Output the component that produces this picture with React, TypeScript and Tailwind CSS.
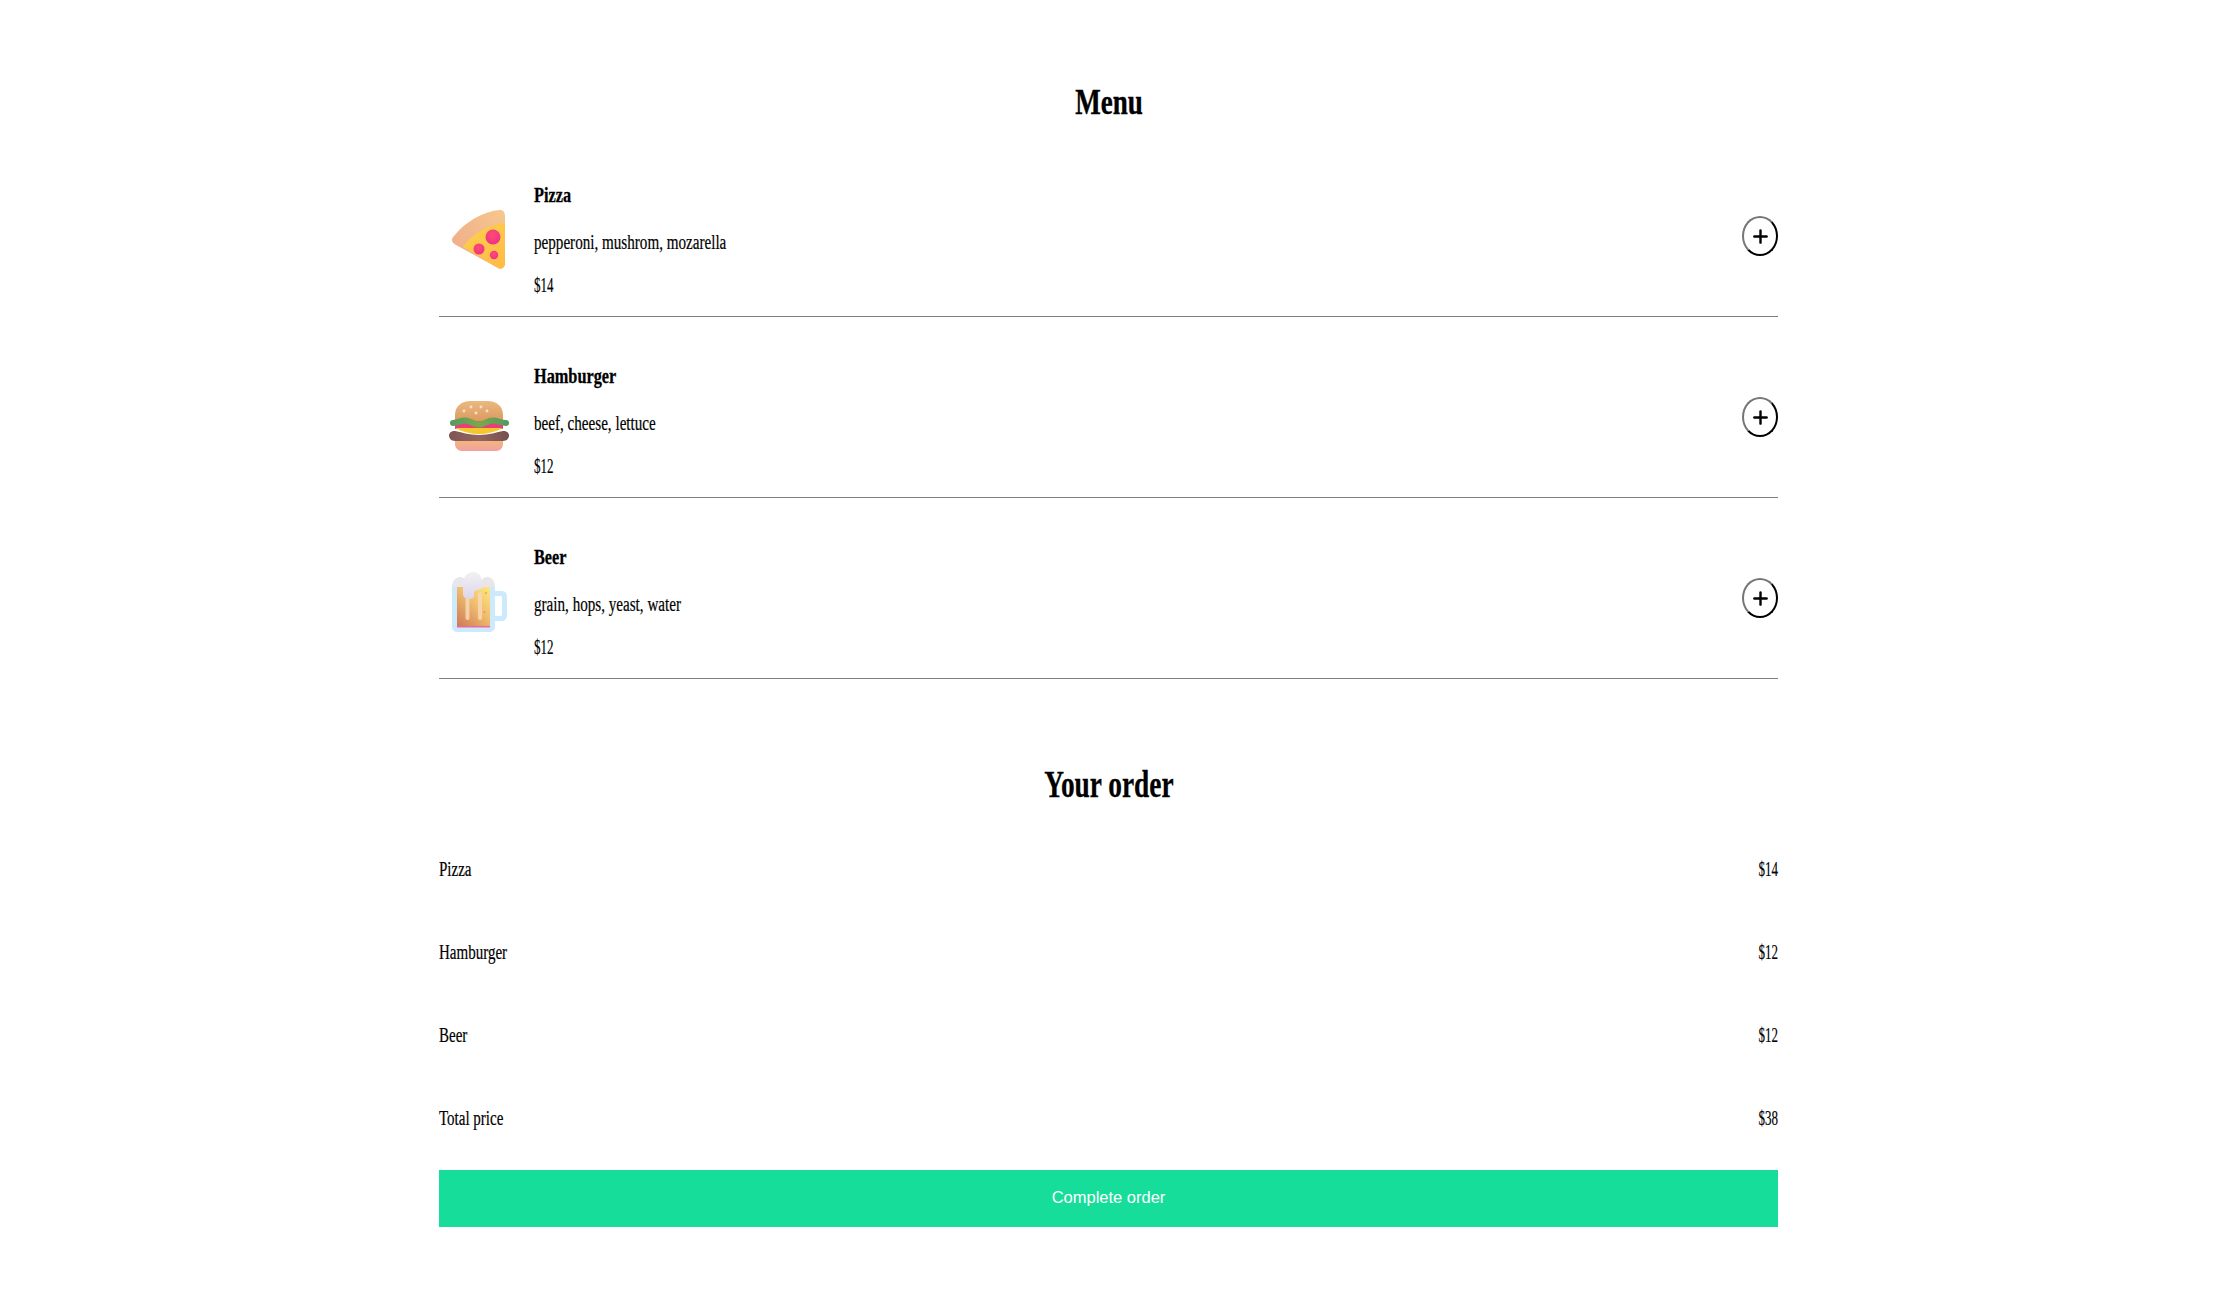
import { Plus } from "lucide-react";

const menuItems = [
  { name: "Pizza", ingredients: "pepperoni, mushrom, mozarella", price: "$14", icon: <PizzaIcon /> },
  { name: "Hamburger", ingredients: "beef, cheese, lettuce", price: "$12", icon: <BurgerIcon /> },
  { name: "Beer", ingredients: "grain, hops, yeast, water", price: "$12", icon: <BeerIcon /> },
];

const orderRows = [
  { label: "Pizza", price: "$14" },
  { label: "Hamburger", price: "$12" },
  { label: "Beer", price: "$12" },
  { label: "Total price", price: "$38" },
];

export default function App() {
  return (
    <div className="flex min-h-[1300px] justify-center bg-white pr-1.5 font-['Liberation_Serif',serif] text-black">
      <main className="w-[1339px]">
        <h1 className="h-[136px] pt-[80px] text-center text-[36px] leading-[44px] font-bold">
          <span className="inline-block scale-x-[0.75] [-webkit-text-stroke:0.4px_black]">Menu</span>
        </h1>

        {menuItems.map((item) => (
          <section key={item.name} className="flex h-[181px] items-start border-b border-[#808080]">
            <div className="mt-[74px] ml-[10px] h-[60px] w-[60px] shrink-0">{item.icon}</div>
            <div className="mt-[45px] ml-[25px] flex min-w-0 flex-1 flex-col">
              <h3 className="mb-[21px] h-[28px] text-[22px] leading-[28px] font-bold">
                <span className="inline-block origin-left scale-x-[0.74] whitespace-nowrap [-webkit-text-stroke:0.3px_black]">
                  {item.name}
                </span>
              </h3>
              <p className="mb-[19px] h-[24px] text-[20px] leading-[24px]">
                <span className="inline-block origin-left scale-x-[0.756] whitespace-nowrap [-webkit-text-stroke:0.2px_black]">
                  {item.ingredients}
                </span>
              </p>
              <p className="h-[24px] text-[20px] leading-[24px]">
                <span className="inline-block origin-left scale-x-[0.65] whitespace-nowrap [-webkit-text-stroke:0.2px_black]">
                  {item.price}
                </span>
              </p>
            </div>
            <button className="mt-[80px] flex h-[40px] w-[36px] shrink-0 items-center justify-center rounded-[50%] border-2 border-t-[#767676] border-r-black border-b-black border-l-[#767676] bg-white">
              <Plus size={21} strokeWidth={2.75} color="#000" />
            </button>
          </section>
        ))}

        <h2 className="mt-[80px] h-[50px] text-center text-[38px] leading-[50px] font-bold">
          <span className="inline-block scale-x-[0.72] [-webkit-text-stroke:0.3px_black]">Your order</span>
        </h2>

        <div className="mt-[48px]">
          {orderRows.map((row) => (
            <div key={row.label} className="flex h-[83px] justify-between text-[20px] leading-[24px]">
              <span className="inline-block origin-left scale-x-[0.75] whitespace-nowrap [-webkit-text-stroke:0.2px_black]">
                {row.label}
              </span>
              <span className="inline-block origin-right scale-x-[0.65] whitespace-nowrap [-webkit-text-stroke:0.2px_black]">
                {row.price}
              </span>
            </div>
          ))}
        </div>

        <button className="-mt-[19px] block h-[57px] w-full bg-[#17dd9a] pb-[2px] font-['Liberation_Sans',sans-serif] text-[16.5px] text-white">
          Complete order
        </button>
      </main>
    </div>
  );
}

function PizzaIcon() {
  return (
    <svg viewBox="0 0 60 60" className="h-full w-full">
      <defs>
        <linearGradient id="crust" x1="0" y1="1" x2="1" y2="0">
          <stop offset="0" stopColor="#eda98a" />
          <stop offset="1" stopColor="#f7c78d" />
        </linearGradient>
        <linearGradient id="cheese" x1="0" y1="0" x2="0.7" y2="1">
          <stop offset="0" stopColor="#fdd24c" />
          <stop offset="1" stopColor="#ffbc47" />
        </linearGradient>
        <radialGradient id="pepperoni" cx="0.45" cy="0.35" r="0.7">
          <stop offset="0" stopColor="#ff4d70" />
          <stop offset="1" stopColor="#ec2f8a" />
        </radialGradient>
      </defs>
      <path
        d="M5 26C16 12 33 2 50 0C54 -.4 56 2 56 6V53C56 57 53 60 49 58L7 35C2 32 2 29 5 26Z"
        fill="url(#crust)"
      />
      <path d="M14 37C22 25 38 15 56 13V53C56 57 53 60 49 58Z" fill="url(#cheese)" />
      <circle cx="44" cy="27" r="7.5" fill="url(#pepperoni)" />
      <circle cx="30" cy="39" r="5.5" fill="url(#pepperoni)" />
      <circle cx="45" cy="45" r="4.2" fill="url(#pepperoni)" />
    </svg>
  );
}

function BurgerIcon() {
  return (
    <svg viewBox="0 0 60 60" className="h-full w-full">
      <defs>
        <linearGradient id="bunTop" x1="0" y1="0" x2="0" y2="1">
          <stop offset="0" stopColor="#ebb97f" />
          <stop offset="1" stopColor="#dc9a60" />
        </linearGradient>
        <linearGradient id="bunBottom" x1="0" y1="0" x2="0" y2="1">
          <stop offset="0" stopColor="#f3b57f" />
          <stop offset="1" stopColor="#f2a0a0" />
        </linearGradient>
        <linearGradient id="lettuce" gradientUnits="userSpaceOnUse" x1="0" y1="0" x2="60" y2="0">
          <stop offset="0" stopColor="#4f9a62" />
          <stop offset="0.5" stopColor="#7ba84a" />
          <stop offset="1" stopColor="#4f9a62" />
        </linearGradient>
        <linearGradient id="patty" x1="0" y1="0" x2="1" y2="0">
          <stop offset="0" stopColor="#7e5655" />
          <stop offset="0.5" stopColor="#94645c" />
          <stop offset="1" stopColor="#75504f" />
        </linearGradient>
      </defs>
      <path d="M6 30V24C6 15 13 10 21 10H39C47 10 54 15 54 24V30Z" fill="url(#bunTop)" />
      <circle cx="15" cy="20" r="1.4" fill="#f3e2cf" />
      <circle cx="22" cy="16" r="1.4" fill="#f3e2cf" />
      <circle cx="27" cy="22" r="1.4" fill="#f3e2cf" />
      <circle cx="32" cy="16" r="1.4" fill="#f3e2cf" />
      <circle cx="38" cy="20" r="1.4" fill="#f3e2cf" />
      <rect x="6" y="30" width="48" height="8" fill="#e83f79" />
      <path d="M6 37H54C46 41 38 43 30 43C22 43 14 41 6 37Z" fill="#f4c72e" />
      <path
        d="M4 32C9 32 12 29 17 29.5C22 30 25 34 31 33.5C36 33 38 29.5 44 29.5C49 29.5 52 32 57 32"
        fill="none"
        stroke="url(#lettuce)"
        strokeWidth="6"
        strokeLinecap="round"
      />
      <path
        d="M6 40C12 41 20 44 30 44C40 44 48 41 54 40C58 40 60 42 60 44.5C60 47 58 50 54 50H6C2 50 0 47 0 44.5C0 42 2 40 6 40Z"
        fill="url(#patty)"
      />
      <path d="M6 50H54V53C54 57 51 60 47 60H13C9 60 6 57 6 53Z" fill="url(#bunBottom)" />
    </svg>
  );
}

function BeerIcon() {
  return (
    <svg viewBox="0 0 60 60" className="h-full w-full">
      <defs>
        <linearGradient id="beer" x1="0.1" y1="1" x2="0.9" y2="0">
          <stop offset="0" stopColor="#d07c58" />
          <stop offset="0.55" stopColor="#f0bd6e" />
          <stop offset="1" stopColor="#ffe580" />
        </linearGradient>
        <linearGradient id="foam" x1="0" y1="0" x2="0" y2="1">
          <stop offset="0" stopColor="#f3f0f3" />
          <stop offset="1" stopColor="#ddd6ea" />
        </linearGradient>
      </defs>
      <path
        d="M46 19H52C56 19 58 21 58 25V43C58 47 56 49 52 49H46V44H51C52.5 44 53 43.5 53 42V26C53 24.5 52.5 24 51 24H46Z"
        fill="#cdeafc"
      />
      <path d="M3 13H46V54C46 58 44 60 40 60H9C5 60 3 58 3 54Z" fill="#cdeafc" />
      <rect x="8" y="14" width="33" height="41" fill="url(#beer)" />
      <rect x="8" y="54" width="33" height="1.5" fill="#ea6aa0" />
      <rect x="16.5" y="20" width="4" height="28" rx="2" fill="#f8d8b4" opacity="0.85" />
      <rect x="29" y="20" width="4" height="28" rx="2" fill="#f8d8b4" opacity="0.85" />
      <circle cx="37" cy="21" r="1.2" fill="#eeb05f" />
      <circle cx="35.5" cy="40" r="1" fill="#e79a5a" />
      <path d="M3 15C3 9 7 5 11 5C16 5 18 9 18 15Z" fill="#e8e6ea" />
      <path d="M31 15C31 9 34 5 38 5C43 5 46 9 46 15Z" fill="#e8e6ea" />
      <path
        d="M14 11C14 5 18 0 24 0C30 0 33 5 33 11V15C33 17 31 18 29 18C27 18 26 19 25 20V23C25 26 23 27 20 27C17 27 14 25 14 22Z"
        fill="url(#foam)"
      />
    </svg>
  );
}
